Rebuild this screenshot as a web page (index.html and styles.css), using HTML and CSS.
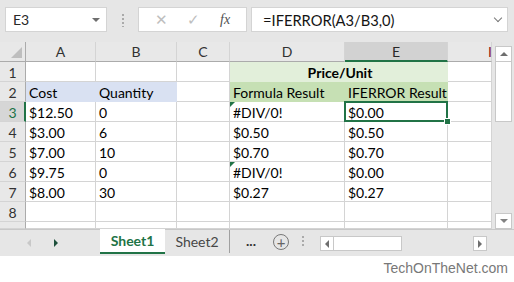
FILE: index.html
```html
<!DOCTYPE html>
<html lang="en">
<head>
    <meta charset="UTF-8">
    <title>IFERROR</title>
    <link rel="stylesheet" href="styles.css">
</head>
<body>
    <div class="app">
        <div class="formula-bar">
            <div class="name-box">E3<span class="caret"></span></div>
            <div class="grip"></div>
            <div class="buttons">
                <span class="btn">&#x2715;</span>
                <span class="btn">&#x2713;</span>
                <span class="btn fx">fx</span>
            </div>
            <div class="formula">=IFERROR(A3/B3,0)<span class="chev"></span></div>
        </div>

        <div class="body">
            <div class="sheet">
                <div class="hd corner"></div>
                <div class="hd">A</div>
                <div class="hd">B</div>
                <div class="hd">C</div>
                <div class="hd">D</div>
                <div class="hd active">E</div>
                <div class="hd"><span class="cut">I</span></div>

                <div class="rh">1</div>
                <div class="c"></div><div class="c"></div><div class="c"></div>
                <div class="c span green1 bold">Price/Unit</div>
                <div class="c"></div>

                <div class="rh">2</div>
                <div class="c blue">Cost</div><div class="c blue">Quantity</div><div class="c"></div>
                <div class="c green2">Formula Result</div><div class="c green2">IFERROR Result</div>
                <div class="c"></div>

                <div class="rh active">3</div>
                <div class="c">$12.50</div><div class="c">0</div><div class="c"></div>
                <div class="c flag">#DIV/0!</div><div class="c selected">$0.00</div>
                <div class="c"></div>

                <div class="rh">4</div>
                <div class="c">$3.00</div><div class="c">6</div><div class="c"></div>
                <div class="c">$0.50</div><div class="c">$0.50</div>
                <div class="c"></div>

                <div class="rh">5</div>
                <div class="c">$7.00</div><div class="c">10</div><div class="c"></div>
                <div class="c">$0.70</div><div class="c">$0.70</div>
                <div class="c"></div>

                <div class="rh">6</div>
                <div class="c">$9.75</div><div class="c">0</div><div class="c"></div>
                <div class="c flag">#DIV/0!</div><div class="c">$0.00</div>
                <div class="c"></div>

                <div class="rh">7</div>
                <div class="c">$8.00</div><div class="c">30</div><div class="c"></div>
                <div class="c">$0.27</div><div class="c">$0.27</div>
                <div class="c"></div>

                <div class="rh">8</div>
                <div class="c"></div><div class="c"></div><div class="c"></div>
                <div class="c"></div><div class="c"></div><div class="c"></div>

                <div class="rh"></div>
                <div class="c"></div><div class="c"></div><div class="c"></div>
                <div class="c"></div><div class="c"></div><div class="c"></div>
            </div>
            <div class="vscroll">
                <div class="sb-btn up"></div>
                <div class="thumb"></div>
                <div class="track"></div>
                <div class="sb-btn down"></div>
            </div>
        </div>

        <div class="tabs">
            <div class="nav">
                <span class="arrow left"></span>
                <span class="arrow right"></span>
            </div>
            <div class="tab current">Sheet1</div>
            <div class="tab">Sheet2</div>
            <div class="more">...</div>
            <div class="add">+</div>
            <div class="grip small"></div>
            <div class="hscroll">
                <div class="hs-btn hl"></div>
                <div class="hthumb"></div>
                <div class="htrack"></div>
                <div class="hs-btn hr"></div>
            </div>
        </div>

        <div class="footer">TechOnTheNet.com</div>
    </div>
</body>
</html>
```

FILE: styles.css
```css
body {
    margin: 0;
    padding: 0;
    background-color: rgb(255, 255, 255);
    font-family: Lato, "Open Sans", sans-serif;
    color: rgb(0, 0, 0);
}

.app {
    display: flex;
    flex-direction: column;
    width: 514px;
    height: 282px;
    overflow: hidden;
}

/* formula bar */

.formula-bar {
    background-color: rgb(230, 230, 230);
    height: 42px;
    box-sizing: border-box;
    padding: 7px 6px 0 5px;
    display: flex;
    align-items: flex-start;
}

.name-box,
.buttons,
.formula {
    background-color: rgb(255, 255, 255);
    border: 1px solid rgb(212, 212, 212);
    box-sizing: border-box;
    height: 25px;
    display: flex;
    align-items: center;
}

.name-box {
    width: 102px;
    padding-left: 7px;
    font-size: 14px;
    color: rgb(40, 40, 40);
    justify-content: space-between;
    padding-right: 6px;
}

.caret {
    width: 0;
    height: 0;
    border-left: 4px solid transparent;
    border-right: 4px solid transparent;
    border-top: 4px solid rgb(110, 110, 110);
}

.grip {
    width: 2px;
    height: 14px;
    margin: 6px 14px 0 15px;
    background-image: radial-gradient(circle, rgb(170, 170, 170) 1px, transparent 1px);
    background-size: 2px 4px;
}

.buttons {
    width: 109px;
    justify-content: space-around;
    padding: 0 6px 0 6px;
    color: rgb(190, 190, 190);
    font-size: 15px;
}

.fx {
    color: rgb(80, 80, 80);
    font-family: "Liberation Serif", serif;
    font-style: italic;
    font-size: 14px;
}

.formula {
    flex: 1;
    margin-left: 4px;
    padding-left: 11px;
    padding-right: 6px;
    font-size: 14.7px;
    justify-content: space-between;
    color: rgb(20, 20, 20);
}

.chev {
    width: 5px;
    height: 5px;
    border-right: 1.5px solid rgb(120, 120, 120);
    border-bottom: 1.5px solid rgb(120, 120, 120);
    transform: rotate(45deg);
    margin-top: -4px;
}

/* grid */

.body {
    display: flex;
    height: 187px;
}

.sheet {
    display: grid;
    grid-template-columns: 26px 70px 81px 53px 115px 103px 44px;
    grid-template-rows: repeat(9, 20px) 7px;
    width: 492px;
    overflow: hidden;
}

.hd {
    background-color: rgb(232, 232, 232);
    border-right: 1px solid rgb(212, 212, 212);
    border-bottom: 1px solid rgb(171, 171, 171);
    box-sizing: border-box;
    font-size: 14px;
    color: rgb(50, 50, 50);
    text-align: center;
    line-height: 20px;
    position: relative;
}

.hd.corner {
    border-right: 1px solid rgb(171, 171, 171);
}

.hd.corner::after {
    content: "";
    position: absolute;
    right: 3px;
    bottom: 3px;
    border-left: 11px solid transparent;
    border-bottom: 11px solid rgb(190, 190, 190);
}

.hd.active {
    background-color: rgb(210, 210, 210);
    border-bottom: 2px solid rgb(33, 115, 70);
    color: rgb(40, 40, 40);
}

.hd:last-child {
    border-right: none;
}

.cut {
    color: rgb(140, 20, 20);
    display: inline-block;
    margin-left: 40px;
}

.rh {
    background-color: rgb(232, 232, 232);
    border-right: 1px solid rgb(171, 171, 171);
    border-bottom: 1px solid rgb(212, 212, 212);
    box-sizing: border-box;
    font-size: 14px;
    text-align: center;
    line-height: 21px;
    color: rgb(50, 50, 50);
}

.rh.active {
    background-color: rgb(214, 214, 214);
    border-right: 2px solid rgb(33, 115, 70);
    color: rgb(33, 115, 70);
    padding-left: 1px;
}

.c {
    border-right: 1px solid rgb(212, 212, 212);
    border-bottom: 1px solid rgb(212, 212, 212);
    box-sizing: border-box;
    font-size: 14px;
    line-height: 21px;
    padding-left: 3px;
    white-space: nowrap;
    position: relative;
}

.span {
    grid-column: span 2;
    text-align: center;
}

.bold {
    font-weight: bold;
}

.blue {
    background-color: rgb(217, 225, 242);
    border-color: rgb(217, 225, 242);
}

.green1 {
    background-color: rgb(226, 239, 218);
    border-color: rgb(226, 239, 218);
}

.green2 {
    background-color: rgb(198, 224, 180);
    border-color: rgb(198, 224, 180);
}

.flag::before {
    content: "";
    position: absolute;
    left: 0;
    top: 0;
    border-top: 5px solid rgb(33, 115, 70);
    border-right: 5px solid transparent;
}

.selected::after {
    content: "";
    position: absolute;
    left: -1px;
    top: -1px;
    right: -1px;
    bottom: -1px;
    border: 2px solid rgb(33, 115, 70);
}

.selected::before {
    content: "";
    position: absolute;
    right: -4px;
    bottom: -4px;
    width: 5px;
    height: 5px;
    background-color: rgb(33, 115, 70);
    border: 1px solid rgb(255, 255, 255);
    z-index: 1;
}

/* vertical scrollbar */

.vscroll {
    flex: 1;
    background-color: rgb(230, 230, 230);
    display: flex;
    flex-direction: column;
    padding: 4px 2px 0 3px;
}

.sb-btn {
    height: 14px;
    background-color: rgb(255, 255, 255);
    border: 1px solid rgb(200, 200, 200);
    display: flex;
    align-items: center;
    justify-content: center;
}

.sb-btn::after {
    content: "";
    border-left: 4px solid transparent;
    border-right: 4px solid transparent;
}

.up::after {
    border-bottom: 4px solid rgb(110, 110, 110);
}

.down::after {
    border-top: 4px solid rgb(130, 130, 130);
}

.thumb {
    height: 59px;
    background-color: rgb(255, 255, 255);
    border: 1px solid rgb(200, 200, 200);
    border-top: none;
}

.track {
    flex: 1;
}

/* sheet tabs */

.tabs {
    height: 27px;
    background-color: rgb(230, 230, 230);
    border-top: 1px solid rgb(200, 200, 200);
    box-sizing: border-box;
    display: flex;
    align-items: stretch;
}

.nav {
    width: 100px;
    display: flex;
    align-items: center;
    gap: 23px;
    padding-left: 27px;
    box-sizing: border-box;
}

.arrow {
    width: 0;
    height: 0;
    border-top: 4px solid transparent;
    border-bottom: 4px solid transparent;
}

.arrow.left {
    border-right: 4px solid rgb(200, 200, 200);
}

.arrow.right {
    border-left: 4px solid rgb(30, 80, 60);
}

.tab {
    width: 65px;
    box-sizing: border-box;
    text-align: center;
    font-size: 14px;
    line-height: 24px;
    color: rgb(70, 70, 70);
    border-right: 1px solid rgb(160, 160, 160);
    margin-bottom: 3px;
}

.tab.current {
    background-color: rgb(255, 255, 255);
    color: rgb(33, 115, 70);
    font-weight: bold;
    border-right: none;
    border-bottom: 2px solid rgb(33, 115, 70);
    margin-top: -1px;
    margin-bottom: 2px;
    line-height: 24px;
}

.more {
    width: 38px;
    padding-left: 4px;
    box-sizing: border-box;
    text-align: center;
    font-size: 14px;
    font-weight: bold;
    color: rgb(50, 50, 50);
    line-height: 22px;
}

.add {
    width: 14px;
    height: 14px;
    margin-top: 4px;
    margin-left: 5px;
    border: 1px solid rgb(120, 120, 120);
    border-radius: 50%;
    text-align: center;
    font-size: 15px;
    line-height: 14px;
    color: rgb(100, 100, 100);
}

.grip.small {
    margin: 5px 16px 0 13px;
    height: 12px;
}

.hscroll {
    width: 167px;
    display: flex;
    height: 15px;
    margin-top: 6px;
}

.hs-btn {
    width: 14px;
    background-color: rgb(255, 255, 255);
    border: 1px solid rgb(200, 200, 200);
    box-sizing: border-box;
    display: flex;
    align-items: center;
    justify-content: center;
}

.hs-btn::after {
    content: "";
    border-top: 4px solid transparent;
    border-bottom: 4px solid transparent;
}

.hl::after {
    border-right: 4px solid rgb(110, 110, 110);
}

.hr::after {
    border-left: 4px solid rgb(110, 110, 110);
}

.hthumb {
    width: 68px;
    background-color: rgb(255, 255, 255);
    border: 1px solid rgb(200, 200, 200);
    border-left: none;
    box-sizing: border-box;
}

.htrack {
    flex: 1;
}

/* footer */

.footer {
    flex: 1;
    text-align: right;
    padding-right: 6px;
    padding-top: 4px;
    font-family: "Liberation Sans", Arial, sans-serif;
    font-size: 14px;
    color: rgb(120, 120, 120);
}
```
